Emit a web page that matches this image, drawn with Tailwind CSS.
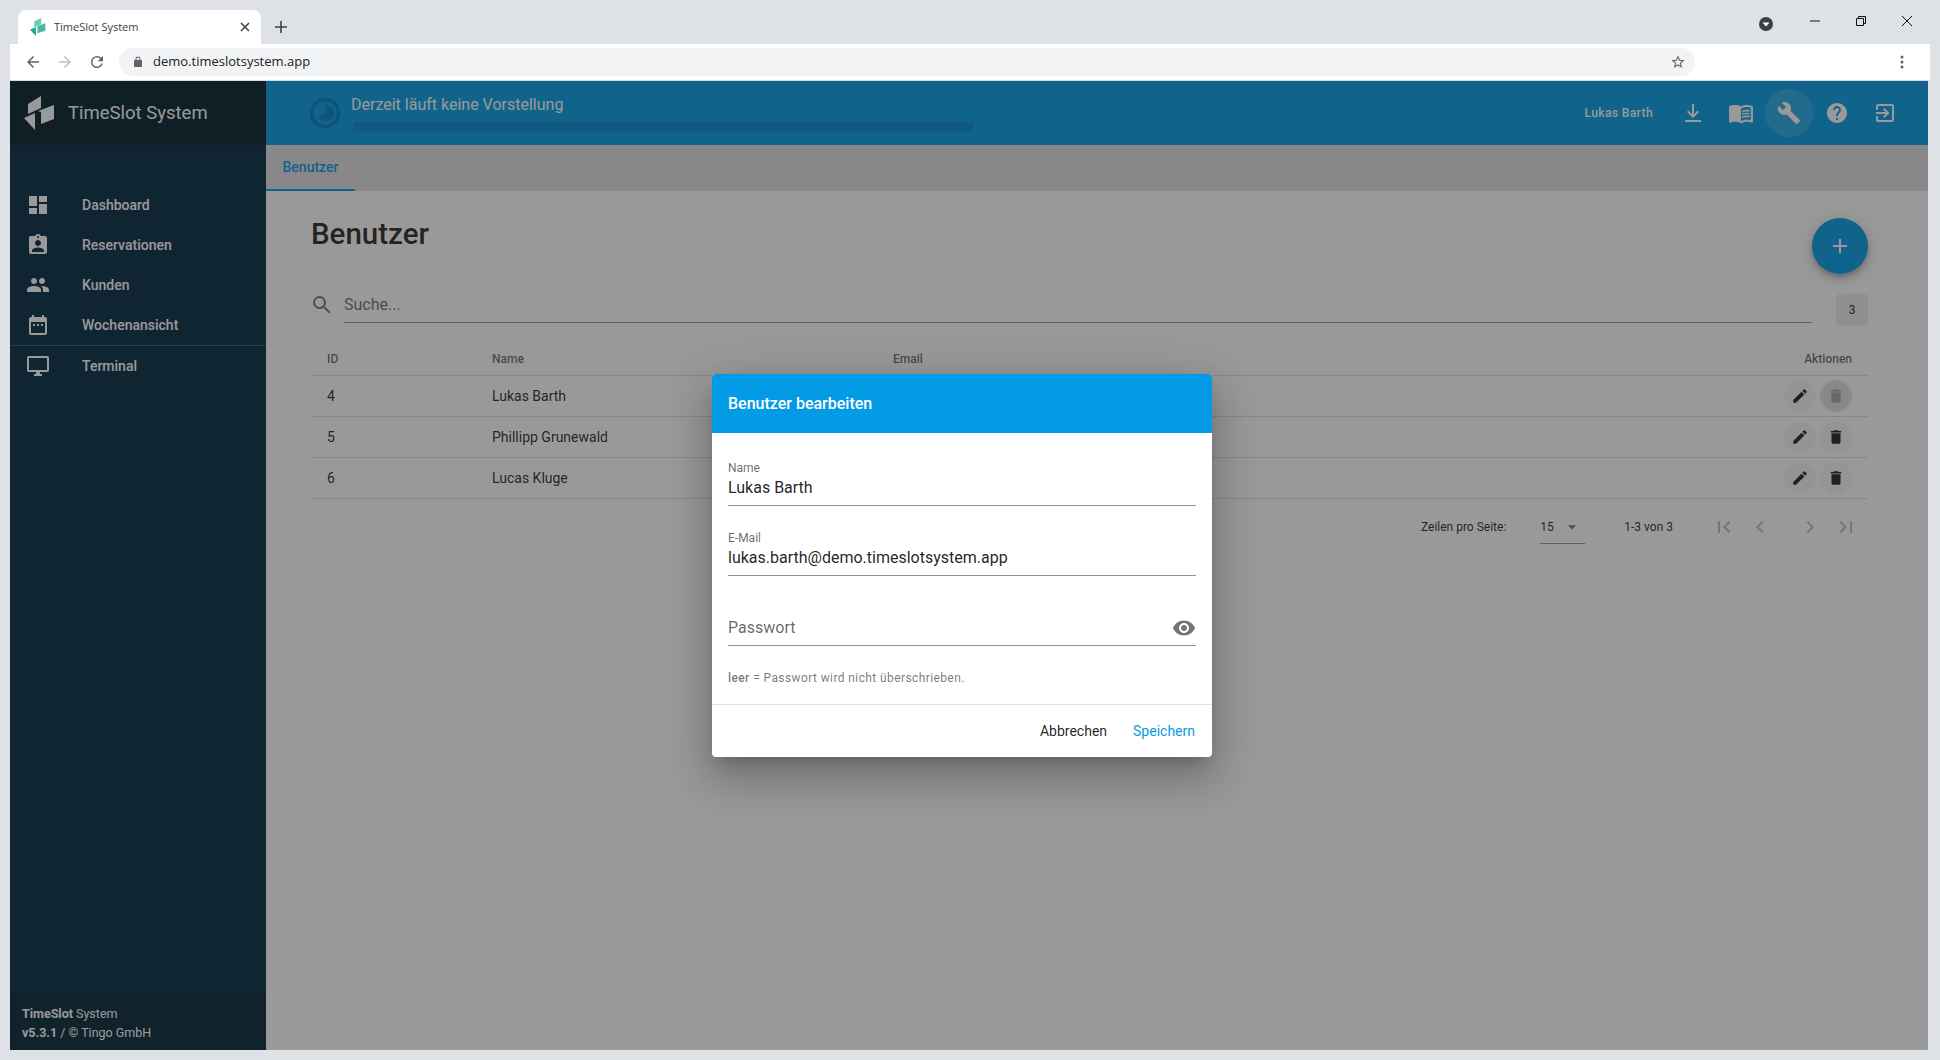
<!DOCTYPE html>
<html lang="de">
<head>
<meta charset="utf-8">
<title>TimeSlot System</title>
<script src="https://cdn.jsdelivr.net/npm/@tailwindcss/browser@4"></script>
</head>
<body class="m-0 h-[1060px] w-[1940px] overflow-hidden bg-[#dee1e6] font-['Roboto',sans-serif]">
<div class="flex h-[1060px] w-[1940px] flex-col pl-[10px] pr-[10px]">
  <!-- browser tab strip -->
  <div class="flex h-[44px] shrink-0 items-end">
    <div class="ml-[8px] flex h-[34px] w-[243px] items-center rounded-t-[8px] bg-white pl-[12px] pr-[10px]">
      <svg class="h-[18px] w-[16px] shrink-0" viewBox="0 0 30 34"><path fill="#6fc8b8" d="M8 6 21 0v12L8 18z"/><path fill="#4db6a4" d="M14 15l15-5v14l-15 5z"/><path fill="#19a88e" d="M0 22l11-5v17z"/></svg>
      <span class="ml-[8px] flex-1 font-['Open_Sans',sans-serif] text-[11px] text-[#3c4043]">TimeSlot System</span>
      <svg class="h-[12px] w-[12px]" viewBox="0 0 12 12"><path d="M2 2l8 8M10 2l-8 8" stroke="#3c4043" stroke-width="1.5"/></svg>
    </div>
    <svg class="mb-[10px] ml-[13px] h-[14px] w-[14px]" viewBox="0 0 14 14"><path d="M7 1v12M1 7h12" stroke="#3c4043" stroke-width="1.6"/></svg>
    <div class="ml-auto flex items-center self-start pt-[17px]">
      <svg class="h-[14px] w-[14px]" viewBox="0 0 14 14"><circle cx="7" cy="7" r="7" fill="#3c4043"/><path d="M3.5 5.5h7L7 9.5z" fill="#fff"/></svg>
      <svg class="ml-[37px] h-[10px] w-[10px] -translate-y-[3px]" viewBox="0 0 10 10"><path d="M0 5h10" stroke="#111" stroke-width="1"/></svg>
      <svg class="ml-[36px] h-[10px] w-[10px] -translate-y-[3px]" viewBox="0 0 10 10"><path d="M.5 2.5h7v7h-7zM2.5 2.5v-2h7v7h-2" fill="none" stroke="#111"/></svg>
      <svg class="ml-[36px] mr-[18px] h-[10px] w-[10px] -translate-y-[3px]" viewBox="0 0 10 10"><path d="M0 0l10 10M10 0L0 10" stroke="#111"/></svg>
    </div>
  </div>
  <!-- browser toolbar -->
  <div class="flex h-[37px] shrink-0 items-center border-b border-[#dadce0] bg-white">
    <svg class="ml-[14px] h-[18px] w-[18px]" viewBox="0 0 24 24" fill="#5f6368"><path d="M20 11H7.83l5.59-5.59L12 4l-8 8 8 8 1.41-1.41L7.83 13H20z"/></svg>
    <svg class="ml-[14px] h-[18px] w-[18px]" viewBox="0 0 24 24" fill="#bdc1c6"><path d="M12 4l-1.41 1.41L16.17 11H4v2h12.17l-5.58 5.59L12 20l8-8z"/></svg>
    <svg class="ml-[14px] h-[18px] w-[18px]" viewBox="0 0 24 24" fill="#5f6368"><path d="M17.65 6.35A7.96 7.96 0 0 0 12 4a8 8 0 1 0 7.73 10h-2.08A6 6 0 1 1 12 6c1.66 0 3.14.69 4.22 1.78L13 11h7V4z"/></svg>
    <div class="ml-[13px] flex h-[28px] w-[1576px] items-center rounded-full bg-[#f1f3f4] pl-[13px] pr-[9px]">
      <svg class="h-[12px] w-[12px]" viewBox="0 0 24 24" fill="#5f6368"><path d="M18 8h-1V6A5 5 0 0 0 7 6v2H6a2 2 0 0 0-2 2v10a2 2 0 0 0 2 2h12a2 2 0 0 0 2-2V10a2 2 0 0 0-2-2zM9 6a3 3 0 0 1 6 0v2H9z"/></svg>
      <span class="ml-[9px] flex-1 font-['Open_Sans',sans-serif] text-[13px] text-[#202124]">demo.timeslotsystem.app</span>
      <svg class="h-[16px] w-[16px]" viewBox="0 0 24 24" fill="#5f6368"><path d="M22 9.24l-7.19-.62L12 2 9.19 8.63 2 9.24l5.46 4.73L5.82 21 12 17.27 18.18 21l-1.63-7.03L22 9.24zM12 15.4l-3.76 2.27 1-4.28-3.32-2.88 4.38-.38L12 6.1l1.71 4.04 4.38.38-3.32 2.88 1 4.28L12 15.4z"/></svg>
    </div>
    <svg class="ml-[205px] h-[14px] w-[4px]" viewBox="0 0 4 14" fill="#5f6368"><circle cx="2" cy="2" r="1.5"/><circle cx="2" cy="7" r="1.5"/><circle cx="2" cy="12" r="1.5"/></svg>
  </div>
  <!-- application -->
  <div class="relative mr-[2px] flex h-[969px] shrink-0 overflow-hidden">
    <aside class="flex w-[256px] shrink-0 flex-col bg-[#032a42] text-white">
      <div class="flex h-[64px] shrink-0 items-center bg-[#021e2c] pl-[14px]">
        <svg class="h-[34px] w-[31px]" viewBox="0 0 31 34" fill="#fff"><path d="M4 8 17 0v12L4 18z"/><path d="M14 15l16-6v14l-13 5V16z" /><path d="M0 22l11-5v17z"/></svg>
        <span class="ml-[13px] text-[18.5px] leading-none">TimeSlot System</span>
      </div>
      <nav class="pt-[40px] text-[14px] font-medium">
        <div class="flex h-[40px] items-center pl-[16px]">
          <svg class="h-[24px] w-[24px]" viewBox="0 0 24 24" fill="#fff"><path d="M13 3v6h8V3M13 21h8V11h-8M3 21h8v-6H3M3 13h8V3H3v10z"/></svg>
          <span class="ml-[32px]">Dashboard</span>
        </div>
        <div class="flex h-[40px] items-center pl-[16px]">
          <svg class="h-[24px] w-[24px]" viewBox="0 0 24 24" fill="#fff"><path d="M19 3h-4.18C14.4 1.84 13.3 1 12 1c-1.3 0-2.4.84-2.82 2H5c-1.1 0-2 .9-2 2v14c0 1.1.9 2 2 2h14c1.1 0 2-.9 2-2V5c0-1.1-.9-2-2-2zm-7 0c.55 0 1 .45 1 1s-.45 1-1 1-1-.45-1-1 .45-1 1-1zm0 4c1.66 0 3 1.34 3 3s-1.34 3-3 3-3-1.34-3-3 1.34-3 3-3zm6 12H6v-1.4c0-2 4-3.1 6-3.1s6 1.1 6 3.1V19z"/></svg>
          <span class="ml-[32px]">Reservationen</span>
        </div>
        <div class="flex h-[40px] items-center pl-[16px]">
          <svg class="h-[24px] w-[24px]" viewBox="0 0 24 24" fill="#fff"><path d="M16 11c1.66 0 2.99-1.34 2.99-3S17.66 5 16 5c-1.66 0-3 1.34-3 3s1.34 3 3 3zm-8 0c1.66 0 2.99-1.34 2.99-3S9.66 5 8 5C6.34 5 5 6.34 5 8s1.34 3 3 3zm0 2c-2.33 0-7 1.17-7 3.5V19h14v-2.5c0-2.33-4.67-3.5-7-3.5zm8 0c-.29 0-.62.02-.97.05 1.16.84 1.97 1.97 1.97 3.45V19h6v-2.5c0-2.33-4.67-3.5-7-3.5z"/></svg>
          <span class="ml-[32px]">Kunden</span>
        </div>
        <div class="flex h-[40px] items-center pl-[16px]">
          <svg class="h-[24px] w-[24px]" viewBox="0 0 24 24" fill="#fff"><path d="M19 4h-1V2h-2v2H8V2H6v2H5c-1.11 0-2 .9-2 2v14a2 2 0 0 0 2 2h14c1.1 0 2-.9 2-2V6c0-1.1-.9-2-2-2zm0 16H5V9h14v11zM7 11h2v2H7zm4 0h2v2h-2zm4 0h2v2h-2z"/></svg>
          <span class="ml-[32px]">Wochenansicht</span>
        </div>
        <div class="flex h-[41px] items-center border-t border-white/20 pl-[16px]">
          <svg class="h-[24px] w-[24px]" viewBox="0 0 24 24" fill="#fff"><path d="M21 2H3c-1.1 0-2 .9-2 2v12c0 1.1.9 2 2 2h7v2H8v2h8v-2h-2v-2h7c1.1 0 2-.9 2-2V4c0-1.1-.9-2-2-2zm0 14H3V4h18v12z"/></svg>
          <span class="ml-[32px]">Terminal</span>
        </div>
      </nav>
      <div class="mt-auto flex h-[58px] flex-col justify-start bg-[#022336] pl-[12px] pt-[12px] text-[12.5px] leading-[19px]">
        <div><b class="font-bold">TimeSlot</b> System</div>
        <div><b class="font-bold">v5.3.1</b> / © Tingo GmbH</div>
      </div>
    </aside>
    <div class="flex min-w-0 flex-1 flex-col bg-white text-black/87">
      <header class="flex h-[64px] shrink-0 items-center bg-[#039be5] pl-[43px] pr-[19px] text-white">
        <svg class="h-[32px] w-[32px] shrink-0" viewBox="0 0 32 32"><circle cx="16" cy="16" r="13.5" fill="none" stroke="#007ec1" stroke-width="3.5"/><path d="M17 8a8 8 0 0 1 0 16 8 8 0 0 1-7-4l7-5z" fill="#007ec1"/></svg>
        <div class="ml-[10px] w-[620px]">
          <div class="pb-[7px] text-[16px] leading-[20px]">Derzeit läuft keine Vorstellung</div>
          <div class="ml-[2px] h-[10px] w-[620px] bg-[#038bd1]"></div>
        </div>
        <span class="ml-auto mr-[16px] text-[12px] font-medium tracking-[.4px]">Lukas Barth</span>
        <span class="flex h-[48px] w-[48px] items-center justify-center"><svg class="h-[24px] w-[24px]" viewBox="0 0 24 24" fill="#fff"><path d="M11 3h2v10.2l3.6-3.6 1.4 1.4-6 6-6-6 1.4-1.4 3.6 3.6zM4 19h16v2H4z"/></svg></span>
        <span class="flex h-[48px] w-[48px] items-center justify-center"><svg class="h-[26px] w-[26px]" viewBox="0 0 24 24" fill="#fff"><path d="M21 5c-1.11-.35-2.33-.5-3.5-.5-1.95 0-4.05.4-5.5 1.5-1.45-1.1-3.55-1.5-5.5-1.5S2.45 4.9 1 6v14.65c0 .25.25.5.5.5.1 0 .15-.05.25-.05C3.1 20.45 5.05 20 6.5 20c1.95 0 4.05.4 5.5 1.5 1.35-.85 3.8-1.5 5.5-1.5 1.65 0 3.35.3 4.75 1.05.1.05.15.05.25.05.25 0 .5-.25.5-.5V6c-.6-.45-1.25-.75-2-1zm0 13.5c-1.1-.35-2.3-.5-3.5-.5-1.7 0-4.15.65-5.5 1.5V8c1.35-.85 3.8-1.5 5.5-1.5 1.2 0 2.4.15 3.5.5v11.5z"/><path d="M17.5 10.5c.88 0 1.73.09 2.5.26V9.24c-.79-.15-1.64-.24-2.5-.24-1.7 0-3.24.29-4.5.83v1.66c1.13-.64 2.7-.99 4.5-.99zM13 12.49v1.66c1.13-.64 2.7-.99 4.5-.99.88 0 1.73.09 2.5.26V11.9c-.79-.15-1.64-.24-2.5-.24-1.7 0-3.24.3-4.5.83zM17.5 14.33c-1.7 0-3.24.29-4.5.83v1.66c1.13-.64 2.7-.99 4.5-.99.88 0 1.73.09 2.5.26v-1.52c-.79-.16-1.64-.24-2.5-.24z"/></svg></span>
        <span class="flex h-[48px] w-[48px] items-center justify-center rounded-full bg-white/15"><svg class="h-[24px] w-[24px]" viewBox="0 0 24 24" fill="#fff"><path d="M22.7 19l-9.1-9.1c.9-2.3.4-5-1.5-6.9-2-2-5-2.4-7.4-1.3L9 6 6 9 1.6 4.7C.4 7.1.9 10.1 2.9 12.1c1.9 1.9 4.6 2.4 6.9 1.5l9.1 9.1c.4.4 1 .4 1.4 0l2.3-2.3c.5-.4.5-1.1.1-1.4z"/></svg></span>
        <span class="flex h-[48px] w-[48px] items-center justify-center"><svg class="h-[24px] w-[24px]" viewBox="0 0 24 24" fill="#fff"><path d="M12 2C6.48 2 2 6.48 2 12s4.48 10 10 10 10-4.48 10-10S17.52 2 12 2zm1 17h-2v-2h2v2zm2.07-7.75l-.9.92C13.45 12.9 13 13.5 13 15h-2v-.5c0-1.1.45-2.1 1.17-2.83l1.24-1.26c.37-.36.59-.86.59-1.41 0-1.1-.9-2-2-2s-2 .9-2 2H8c0-2.21 1.79-4 4-4s4 1.79 4 4c0 .88-.36 1.68-.93 2.25z"/></svg></span>
        <span class="flex h-[48px] w-[48px] items-center justify-center"><svg class="h-[24px] w-[24px]" viewBox="0 0 24 24" fill="#fff"><path d="M10.09 15.59L11.5 17l5-5-5-5-1.41 1.41L12.67 11H3v2h9.67l-2.58 2.59zM19 3H5c-1.11 0-2 .9-2 2v4h2V5h14v14H5v-4H3v4c0 1.1.89 2 2 2h14c1.1 0 2-.9 2-2V5c0-1.1-.9-2-2-2z"/></svg></span>
      </header>
      <div class="flex h-[46px] shrink-0 bg-[#e0e0e0]">
        <div class="flex w-[89px] items-center justify-center border-b-2 border-[#039be5] text-[14px] font-medium text-[#039be5]">Benutzer</div>
      </div>
      <main class="flex flex-col pl-[45px] pr-[60px] pt-[27px]">
        <div class="flex h-[56px] items-start justify-between">
          <h1 class="text-[29.5px] font-medium leading-[32px]">Benutzer</h1>
          <div class="flex h-[56px] w-[56px] items-center justify-center rounded-full bg-[#039be5] shadow-[0_3px_5px_-1px_rgba(0,0,0,.2),0_6px_10px_0_rgba(0,0,0,.14),0_1px_18px_0_rgba(0,0,0,.12)]">
            <svg class="h-[24px] w-[24px]" viewBox="0 0 24 24" fill="#fff"><path d="M19 13h-6v6h-2v-6H5v-2h6V5h2v6h6z"/></svg>
          </div>
        </div>
        <div class="mt-[20px] flex h-[32px] items-start">
          <svg class="-mt-px h-[24px] w-[24px] shrink-0 ml-[-1px]" viewBox="0 0 24 24" fill="#000" fill-opacity=".54"><path d="M15.5 14h-.79l-.28-.27A6.47 6.47 0 0 0 16 9.5 6.5 6.5 0 1 0 9.5 16c1.61 0 3.09-.59 4.23-1.57l.27.28v.79l5 4.99L20.49 19l-4.99-5zm-6 0C7.01 14 5 11.99 5 9.5S7.01 5 9.5 5 14 7.01 14 9.5 11.99 14 9.5 14z"/></svg>
          <div class="ml-[10px] flex h-[29px] flex-1 items-start border-b border-black/42 text-[16px] leading-[22px] text-black/60">Suche...</div>
          <div class="ml-[24px] flex h-[32px] w-[32px] items-center justify-center rounded-[4px] bg-[#eeeeee] text-[12px]">3</div>
        </div>
        <div class="mt-[16px] grid h-[34px] grid-cols-[165px_401px_1fr_auto] items-center border-b border-black/12 text-[12px] font-medium text-black/60">
          <div class="pl-[16px]">ID</div><div class="pl-[16px]">Name</div><div class="pl-[16px]">Email</div><div class="pr-[16px]">Aktionen</div>
        </div>
        <div class="grid h-[41px] grid-cols-[165px_401px_1fr_auto] items-center border-b border-black/12 text-[14px]">
          <div class="pl-[16px]">4</div><div class="pl-[16px]">Lukas Barth</div><div class="pl-[16px]">lukas.barth@demo.timeslotsystem.app</div>
          <div class="flex gap-[4px] pr-[16px]">
            <span class="flex h-[32px] w-[32px] items-center justify-center rounded-full bg-black/4"><svg class="h-[18px] w-[18px]" viewBox="0 0 24 24" fill="#000" fill-opacity=".87"><path d="M3 17.25V21h3.75L17.81 9.94l-3.75-3.75L3 17.25zM20.71 7.04c.39-.39.39-1.02 0-1.41l-2.34-2.34c-.39-.39-1.02-.39-1.41 0l-1.83 1.83 3.75 3.75 1.83-1.83z"/></svg></span>
            <span class="flex h-[32px] w-[32px] items-center justify-center rounded-full bg-black/12"><svg class="h-[18px] w-[18px]" viewBox="0 0 24 24" fill="#000" fill-opacity=".26"><path d="M6 19c0 1.1.9 2 2 2h8c1.1 0 2-.9 2-2V7H6v12zM19 4h-3.5l-1-1h-5l-1 1H5v2h14V4z"/></svg></span>
          </div>
        </div>
        <div class="grid h-[41px] grid-cols-[165px_401px_1fr_auto] items-center border-b border-black/12 text-[14px]">
          <div class="pl-[16px]">5</div><div class="pl-[16px]">Phillipp Grunewald</div><div class="pl-[16px]">phillipp.grunewald@demo.timeslotsystem.app</div>
          <div class="flex gap-[4px] pr-[16px]">
            <span class="flex h-[32px] w-[32px] items-center justify-center rounded-full bg-black/4"><svg class="h-[18px] w-[18px]" viewBox="0 0 24 24" fill="#000" fill-opacity=".87"><path d="M3 17.25V21h3.75L17.81 9.94l-3.75-3.75L3 17.25zM20.71 7.04c.39-.39.39-1.02 0-1.41l-2.34-2.34c-.39-.39-1.02-.39-1.41 0l-1.83 1.83 3.75 3.75 1.83-1.83z"/></svg></span>
            <span class="flex h-[32px] w-[32px] items-center justify-center rounded-full bg-black/4"><svg class="h-[18px] w-[18px]" viewBox="0 0 24 24" fill="#000" fill-opacity=".87"><path d="M6 19c0 1.1.9 2 2 2h8c1.1 0 2-.9 2-2V7H6v12zM19 4h-3.5l-1-1h-5l-1 1H5v2h14V4z"/></svg></span>
          </div>
        </div>
        <div class="grid h-[41px] grid-cols-[165px_401px_1fr_auto] items-center border-b border-black/12 text-[14px]">
          <div class="pl-[16px]">6</div><div class="pl-[16px]">Lucas Kluge</div><div class="pl-[16px]">lucas.kluge@demo.timeslotsystem.app</div>
          <div class="flex gap-[4px] pr-[16px]">
            <span class="flex h-[32px] w-[32px] items-center justify-center rounded-full bg-black/4"><svg class="h-[18px] w-[18px]" viewBox="0 0 24 24" fill="#000" fill-opacity=".87"><path d="M3 17.25V21h3.75L17.81 9.94l-3.75-3.75L3 17.25zM20.71 7.04c.39-.39.39-1.02 0-1.41l-2.34-2.34c-.39-.39-1.02-.39-1.41 0l-1.83 1.83 3.75 3.75 1.83-1.83z"/></svg></span>
            <span class="flex h-[32px] w-[32px] items-center justify-center rounded-full bg-black/4"><svg class="h-[18px] w-[18px]" viewBox="0 0 24 24" fill="#000" fill-opacity=".87"><path d="M6 19c0 1.1.9 2 2 2h8c1.1 0 2-.9 2-2V7H6v12zM19 4h-3.5l-1-1h-5l-1 1H5v2h14V4z"/></svg></span>
          </div>
        </div>
        <div class="flex h-[56px] items-center justify-end pr-[10px] text-[12px]">
          <span>Zeilen pro Seite:</span>
          <span class="ml-[34px] flex h-[34px] w-[45px] items-center justify-between border-b border-black/42 pr-[3px] pt-[1px]">15<svg class="h-[20px] w-[20px]" viewBox="0 0 24 24" fill="#000" fill-opacity=".54"><path d="M7 10l5 5 5-5z"/></svg></span>
          <span class="ml-[39px]">1-3 von 3</span>
          <span class="ml-[39px] flex items-center">
            <svg class="h-[24px] w-[24px]" viewBox="0 0 24 24" fill="#000" fill-opacity=".26"><path d="M18.41 16.59L13.82 12l4.59-4.59L17 6l-6 6 6 6zM6 6h2v12H6z"/></svg>
            <svg class="ml-[12px] h-[24px] w-[24px]" viewBox="0 0 24 24" fill="#000" fill-opacity=".26"><path d="M15.41 7.41L14 6l-6 6 6 6 1.41-1.41L10.83 12z"/></svg>
            <svg class="ml-[26px] h-[24px] w-[24px]" viewBox="0 0 24 24" fill="#000" fill-opacity=".26"><path d="M10 6L8.59 7.41 13.17 12l-4.58 4.59L10 18l6-6z"/></svg>
            <svg class="ml-[12px] h-[24px] w-[24px]" viewBox="0 0 24 24" fill="#000" fill-opacity=".26"><path d="M5.59 7.41L10.18 12l-4.59 4.59L7 18l6-6-6-6zM16 6h2v12h-2z"/></svg>
          </span>
        </div>
      </main>
    </div>
    <!-- dialog scrim -->
    <div class="absolute inset-0 bg-[#212121]/46"></div>
    <!-- dialog -->
    <div class="absolute left-[702px] top-[293px] w-[500px] overflow-hidden rounded-[4px] bg-white shadow-[0_11px_15px_-7px_rgba(0,0,0,.2),0_24px_38px_3px_rgba(0,0,0,.14),0_9px_46px_8px_rgba(0,0,0,.12)]">
      <div class="flex h-[59px] items-center bg-[#039be5] pl-[16px] text-[16px] font-medium text-white">Benutzer bearbeiten</div>
      <div class="flex flex-col gap-[24px] px-[16px] pt-[27px]">
        <div class="h-[46px] border-b border-black/42">
          <div class="h-[16px] text-[12px] leading-[16px] text-black/60">Name</div>
          <div class="h-[24px] text-[16px] leading-[24px] text-black/87">Lukas Barth</div>
        </div>
        <div class="h-[46px] border-b border-black/42">
          <div class="h-[16px] text-[12px] leading-[16px] text-black/60">E-Mail</div>
          <div class="h-[24px] text-[16px] leading-[24px] text-black/87">lukas.barth@demo.timeslotsystem.app</div>
        </div>
        <div class="flex h-[46px] items-end border-b border-black/42 pb-[5px]">
          <div class="h-[24px] flex-1 text-[16px] leading-[24px] text-black/60">Passwort</div>
          <svg class="h-[24px] w-[24px]" viewBox="0 0 24 24" fill="#000" fill-opacity=".54"><path d="M12 4.5C7 4.5 2.73 7.61 1 12c1.73 4.39 6 7.5 11 7.5s9.27-3.11 11-7.5c-1.73-4.39-6-7.5-11-7.5zM12 17c-2.76 0-5-2.24-5-5s2.24-5 5-5 5 2.24 5 5-2.24 5-5 5zm0-8c-1.66 0-3 1.34-3 3s1.34 3 3 3 3-1.34 3-3-1.34-3-3-3z"/></svg>
        </div>
      </div>
      <div class="mt-[24px] h-[35px] border-b border-black/12 px-[16px] text-[12px] leading-[16px] tracking-[.4px] text-black/54"><b class="font-medium">leer</b> = Passwort wird nicht überschrieben.</div>
      <div class="flex h-[52px] items-center justify-end gap-[26px] pr-[17px] text-[14px] font-medium">
        <span class="font-normal text-black/87">Abbrechen</span>
        <span class="font-normal text-[#039be5]">Speichern</span>
      </div>
    </div>
  </div>
</div>
</body>
</html>
